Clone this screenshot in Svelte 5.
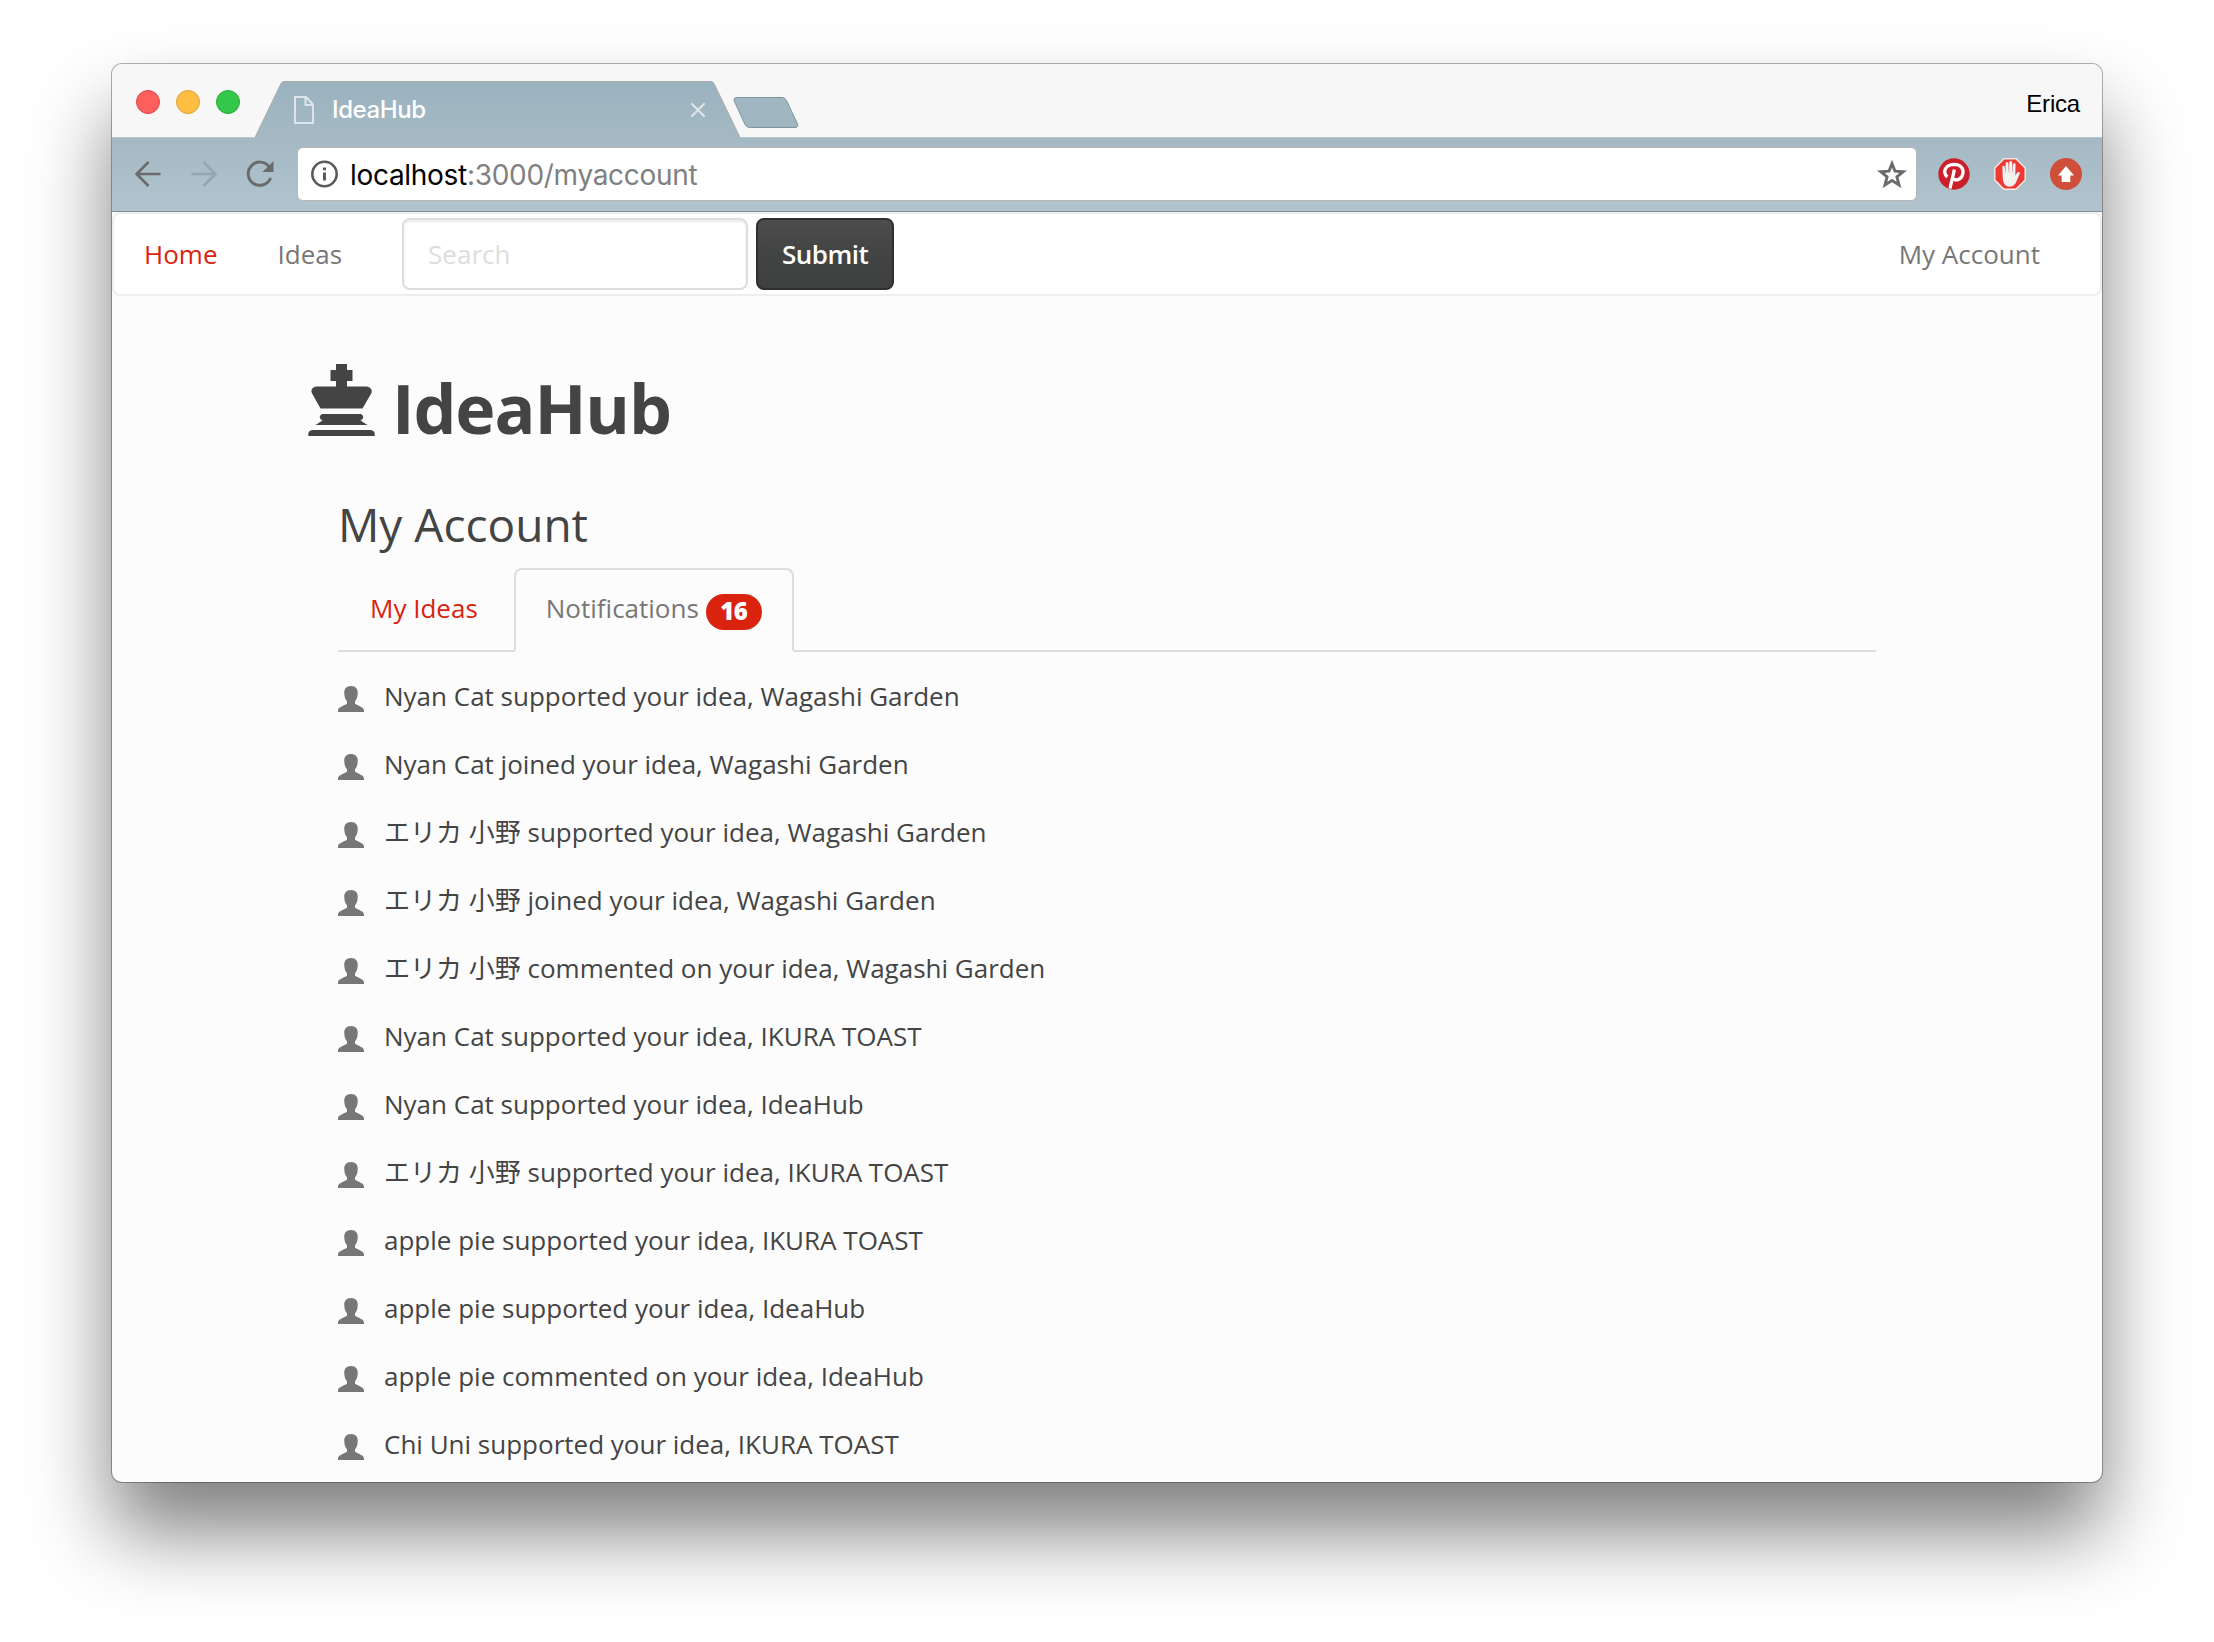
<script>
  const notifications = [
    'Nyan Cat supported your idea, Wagashi Garden',
    'Nyan Cat joined your idea, Wagashi Garden',
    'エリカ 小野 supported your idea, Wagashi Garden',
    'エリカ 小野 joined your idea, Wagashi Garden',
    'エリカ 小野 commented on your idea, Wagashi Garden',
    'Nyan Cat supported your idea, IKURA TOAST',
    'Nyan Cat supported your idea, IdeaHub',
    'エリカ 小野 supported your idea, IKURA TOAST',
    'apple pie supported your idea, IKURA TOAST',
    'apple pie supported your idea, IdeaHub',
    'apple pie commented on your idea, IdeaHub',
    'Chi Uni supported your idea, IKURA TOAST'
  ];
</script>

<div class="desktop">
  <div class="window">
    <header class="titlebar">
      <div class="lights">
        <span class="light red"></span>
        <span class="light yellow"></span>
        <span class="light green"></span>
      </div>
      <div class="tab">
        <svg class="tab-shape" width="486" height="58" viewBox="0 0 486 58">
          <defs>
            <linearGradient id="tabfill" x1="0" y1="0" x2="0" y2="1">
              <stop offset="0" stop-color="#9bb3bf" />
              <stop offset="1" stop-color="#a4b9c4" />
            </linearGradient>
          </defs>
          <path d="M0 58V56.5L26 2.5Q27 .5 29 .5H456Q458 .5 459 2.5L485 56.5V58Z" fill="url(#tabfill)" />
          <path d="M0 56.5L26 2.5Q27 .5 29 .5H456Q458 .5 459 2.5L485 56.5" fill="none" stroke="#a9a9a9" />
        </svg>
        <svg class="page-icon" width="20" height="28" viewBox="0 0 20 28" fill="none" stroke="#dde5e9" stroke-width="2">
          <path d="M1 1H12L19 8.5V27H1ZM11.5 1V9H19" />
        </svg>
        <span class="tab-title">IdeaHub</span>
        <svg class="close" width="14" height="14" viewBox="0 0 14 14" stroke="#dfe6ea" stroke-width="2" stroke-linecap="round">
          <path d="M1 1L13 13M13 1L1 13" />
        </svg>
      </div>
      <svg class="new-tab" width="67" height="33" viewBox="0 0 67 33">
        <path d="M4 1.5H49Q52 1.5 53.5 4.5L64.500 28Q65.500 31.500 62 31.500H17Q13.500 31.500 12 28.500L1 4.500Q.5 1.500 4 1.500Z" fill="#a0b7c2" stroke="#7f939e" />
      </svg>
      <span class="profile">Erica</span>
    </header>

    <div class="toolbar">
      <svg width="26" height="26" viewBox="0 0 26 26" fill="none" stroke="#6b6b6b" stroke-width="2.6">
        <path d="M25.500 13H2M13.500 1L1.700 13L13.500 25" />
      </svg>
      <svg class="forward" width="26" height="26" viewBox="0 0 26 26" fill="none" stroke="#92a6b1" stroke-width="2.6">
        <path d="M.5 13H24M12.500 1L24.300 13L12.500 25" />
      </svg>
      <svg class="reload" width="28" height="28" viewBox="0 0 28 28">
        <path d="M23.300 7A11.600 11.600 0 1 0 24.600 18" fill="none" stroke="#6b6b6b" stroke-width="3" />
        <path d="M27.500 1V12H16.500Z" fill="#6b6b6b" />
      </svg>
      <div class="address">
        <svg width="28" height="28" viewBox="0 0 28 28">
          <circle cx="13.500" cy="14" r="12.200" fill="none" stroke="#5a5a5a" stroke-width="2.600" />
          <path d="M12 7.500H15V10.300H12ZM12 12.500H15V20.500H12Z" fill="#5a5a5a" />
        </svg>
        <span class="url">localhost<i>:3000/myaccount</i></span>
        <svg class="star" width="30" height="28" viewBox="0 0 30 28">
          <path d="M15 3.600L18 11.200L26.200 11.700L19.900 16.900L22 24.900L15 20.500L8 24.900L10.100 16.900L3.800 11.700L12 11.200Z" fill="none" stroke="#6b6b6b" stroke-width="2.900" />
        </svg>
      </div>
      <svg class="ext" width="32" height="32" viewBox="0 0 32 32">
        <circle cx="16" cy="16" r="15.700" fill="#cb1f2b" />
        <path d="M9.300 19C4 14 7.500 6.500 16 6.300C23 6.300 26 11 24.800 16C23.600 21.800 17.500 23.600 14.800 20.200M16.300 11.500C15.200 18.500 13.500 23 12 30.500" fill="none" stroke="#fff" stroke-width="3.300" />
      </svg>
      <svg class="ext" width="32" height="32" viewBox="0 0 32 32">
        <path d="M10 .8H22L31.200 10V22L22 31.200H10L.8 22V10Z" fill="#ee3a34" stroke="#f6e9e8" stroke-width="1.400" />
        <path d="M8.300 8.500Q9.700 7 10.800 8.500L11.300 14L11.700 5Q13 3 14.400 5L14.700 13L15.300 4Q16.800 2 18.200 4V13.500L19 6Q20.400 4.500 21.600 6L21.300 17.500L23.300 14.500Q25 13.500 26 15L21.500 25.500Q18.500 29.500 14 28.500Q9.500 27.500 8.800 21Z" fill="#f1f1f1" />
        <path d="M11.400 8V15M14.900 6V14.500M18.600 6.500V14.500" stroke="#c9a5a3" stroke-width=".7" />
      </svg>
      <svg class="ext" width="32" height="32" viewBox="0 0 32 32">
        <circle cx="16" cy="16" r="16" fill="#cf4f3a" />
        <path d="M16 8L24 17.500H20.300V24H11.700V17.500H8Z" fill="#fff" />
      </svg>
    </div>

    <main class="page">
      <nav class="navbar">
        <span class="link active">Home</span>
        <span class="link">Ideas</span>
        <div class="search">Search</div>
        <div class="submit">Submit</div>
        <span class="link account">My Account</span>
      </nav>

      <h1>
        <svg width="67" height="72" viewBox="0 0 67 72" fill="#444">
          <path d="M28 0H39V6H44.500V17H39V22.500H59Q65 24 63.500 29L54.500 44.500H12.500L3.800 29Q2 24 8 22.500H28V17H22.500V6H28Z" />
          <path d="M14 50H53Q57 52.500 54 55.500L52.500 56.500L59.500 61H7.500L14.500 56.500L13 55.500Q10 52.500 14 50Z" />
          <path d="M.3 72V69Q1 66.300 4 66H63Q66 66.300 66.700 69V72Z" />
        </svg>
        <span>IdeaHub</span>
      </h1>

      <section class="content">
        <h2>My Account</h2>
        <div class="tabs">
          <div class="pill">My Ideas</div>
          <div class="pill current">Notifications <span class="badge">16</span></div>
        </div>
        <ul>
          {#each notifications as text}
            <li>
              <svg width="26" height="26" viewBox="0 0 26 26">
                <path d="M13 0C17.600 0 20.200 3 19.700 7.500C19.500 11 18.800 13.500 17 15.200V17.500C17 18.500 26 21 26 24V26H0V24C0 21 9 18.500 9 17.500V15.200C7.200 13.500 6.500 11 6.300 7.500C5.800 3 8.400 0 13 0Z" fill="#777" />
              </svg>
              <span>{text}</span>
            </li>
          {/each}
        </ul>
      </section>
    </main>
  </div>
</div>

<style>
  :global(body) { background: #fff; overflow: hidden; }
  .desktop {
    box-sizing: border-box;
    width: 2214px;
    height: 1642px;
    padding: 64px 112px 0;
    overflow: hidden;
    background: #fff;
  }
  .window {
    width: 1990px;
    height: 1418px;
    display: flex;
    flex-direction: column;
    border-radius: 10px;
    overflow: hidden;
    background: #fcfcfc;
    box-shadow: 0 0 0 1px rgba(0, 0, 0, 0.3), 0 50px 80px rgba(0, 0, 0, 0.5);
  }
  svg { display: block; flex: none; }
  .titlebar {
    box-sizing: border-box;
    flex: none;
    height: 74px;
    display: flex;
    align-items: flex-start;
    background: #f7f7f7;
    border-bottom: 1px solid #b5c6d0;
  }
  .lights { display: flex; gap: 16px; padding: 26px 0 0 24px; width: 119px; }
  .light { box-sizing: border-box; width: 24px; height: 24px; border-radius: 50%; border: 1px solid; }
  .red { background: #fd605c; border-color: #e04543; }
  .yellow { background: #fdbe41; border-color: #dfa032; }
  .green { background: #34c84a; border-color: #27ab38; }
  .tab {
    position: relative;
    box-sizing: border-box;
    width: 486px;
    height: 58px;
    margin-top: 17px;
    padding: 0 36px 0 39px;
    display: flex;
    align-items: center;
  }
  .tab-shape { position: absolute; left: 0; top: 0; }
  .page-icon { position: relative; }
  .tab-title {
    position: relative;
    margin-left: 18px;
    flex: 1;
    color: #fff;
    font: 500 24px/30px Inter, sans-serif;
    letter-spacing: -0.4px;
  }
  .close { position: relative; }
  .new-tab { margin: 32px 0 0 -8px; position: relative; }
  .profile { margin: 26px 22px 0 auto; font: 24px/28px "Liberation Sans", sans-serif; letter-spacing: -0.2px; color: #000; }
  .toolbar {
    box-sizing: border-box;
    flex: none;
    height: 74px;
    padding: 0 20px 2px 23px;
    display: flex;
    align-items: center;
    background: linear-gradient(#a4b9c4, #b1c4ce);
    border-bottom: 1px solid #78909c;
  }
  .forward { margin-left: 30px; }
  .reload { margin-left: 29px; }
  .address {
    box-sizing: border-box;
    height: 54px;
    flex: 1;
    margin-left: 23px;
    padding: 0 9px 0 13px;
    display: flex;
    align-items: center;
    background: #fff;
    border: 1px solid #b8b8b8;
    border-radius: 6px;
  }
  .url { margin-left: 11px; padding-top: 2px; flex: 1; font: 28px/36px Inter, sans-serif; letter-spacing: -0.3px; color: #000; }
  .url i { font-style: normal; color: #808080; }
  .ext { margin-left: 24px; }
  .address + .ext { margin-left: 21px; }

  .page { flex: 1; min-height: 0; font: 26px/40px "Open Sans", "Noto Sans CJK JP", sans-serif; color: #444; }
  .navbar {
    box-sizing: border-box;
    height: 84px;
    display: flex;
    align-items: center;
    background: #fff;
    border: 2px solid #eee;
    border-radius: 8px;
  }
  .link { padding: 0 30px; color: #777; }
  .active { color: #d9230f; }
  .account { margin-left: auto; margin-right: 30px; }
  .search, .submit { box-sizing: border-box; height: 72px; border: 2px solid #ddd; border-radius: 8px; line-height: 68px; }
  .search { width: 346px; margin-left: 30px; padding-left: 24px; color: #ddd; box-shadow: inset 0 2px 2px rgba(0, 0, 0, 0.075); }
  .submit {
    width: 138px;
    margin-left: 8px;
    text-align: center;
    color: #fff;
    font-weight: 600;
    letter-spacing: -0.5px;
    border-color: #2e2f2e;
    background: linear-gradient(#4c4d4c, #424443 50%, #3f4140);
  }
  h1 { display: flex; align-items: flex-start; gap: 17px; margin: 68px 0 0 196px; height: 106px; font-size: 68px; line-height: 88px; font-weight: 700; letter-spacing: -1.1px; }
  .content { width: 1538px; margin-left: 226px; }
  h2 { margin: 23px 0 13px; height: 62px; font-size: 46px; line-height: 62px; font-weight: 400; }
  .tabs { box-sizing: border-box; height: 84px; display: flex; align-items: flex-start; gap: 4px; border-bottom: 2px solid #ddd; }
  .pill { box-sizing: border-box; height: 84px; padding: 18px 30px 0; border: 2px solid transparent; color: #d9230f; white-space: nowrap; }
  .current { display: flex; gap: 7px; color: #777; background: #fcfcfc; border: 2px solid #ddd; border-bottom-color: #fcfcfc; border-radius: 8px 8px 0 0; }
  .badge { box-sizing: border-box; width: 56px; height: 36px; margin-top: 6px; border-radius: 20px; background: #d9230f; color: #fff; font-weight: 800; font-size: 24px; line-height: 34px; letter-spacing: -0.5px; text-align: center; }
  ul { margin: 0; padding: 24px 0 0; list-style: none; }
  li { display: flex; align-items: center; gap: 20px; height: 40px; margin-bottom: 28px; white-space: nowrap; }
  li svg { margin-top: 6px; }
</style>
